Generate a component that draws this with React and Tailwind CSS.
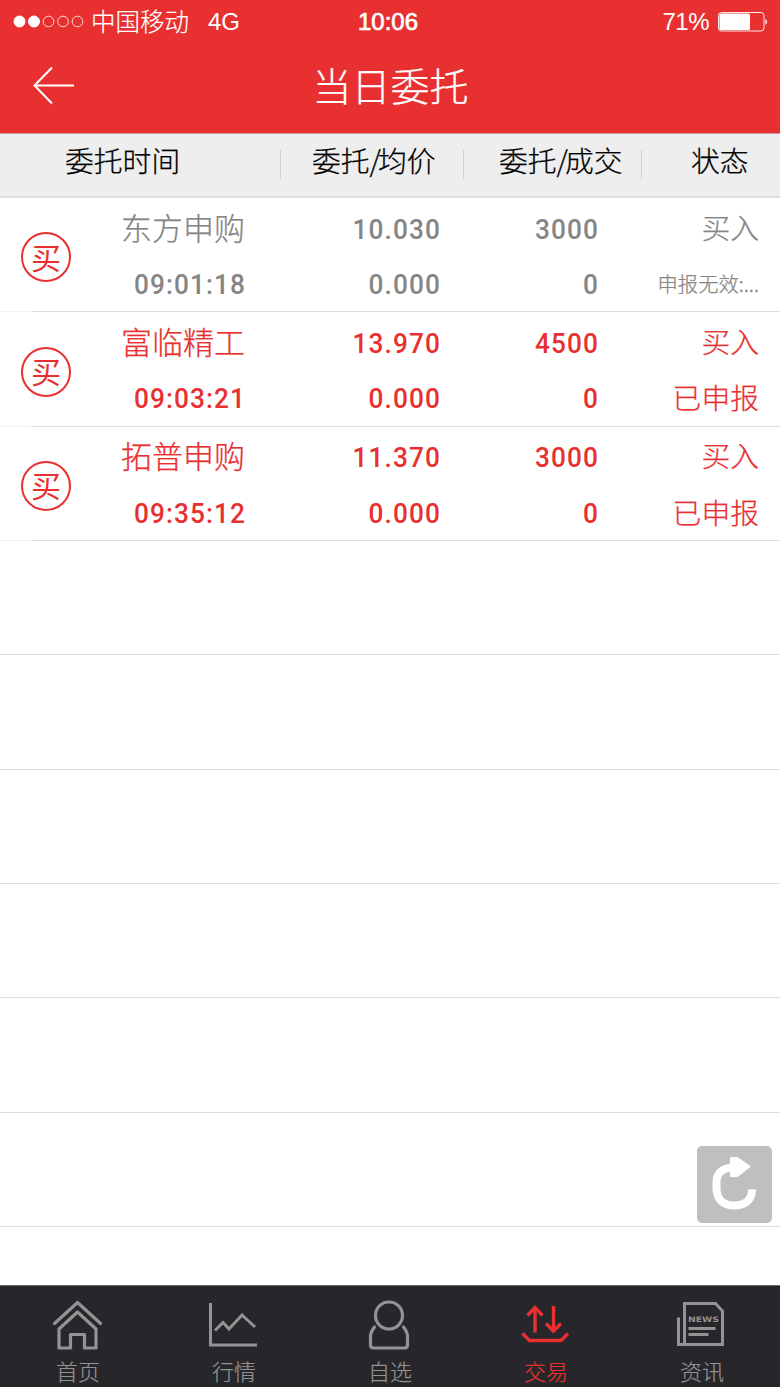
import React, { useState } from 'react';
import clsx from 'clsx';

const orders = [
  { name: '东方申购', time: '09:01:18', price: '10.030', avg: '0.000', amount: '3000', filled: '0', side: '买入', status: '申报无效:...', invalid: true },
  { name: '富临精工', time: '09:03:21', price: '13.970', avg: '0.000', amount: '4500', filled: '0', side: '买入', status: '已申报' },
  { name: '拓普申购', time: '09:35:12', price: '11.370', avg: '0.000', amount: '3000', filled: '0', side: '买入', status: '已申报' },
];

const HomeIcon = () => (
  <svg width="52" height="52" viewBox="0 0 52 52" fill="none" stroke="currentColor" strokeWidth="3.2" strokeLinecap="round" strokeLinejoin="round">
    <path d="M2.500 24.500L25.500 3.500L48.500 24.500" />
    <path d="M25.500 13L44 30V49H32.500V35.500H18.500V49H7V30Z" />
  </svg>
);

const ChartIcon = () => (
  <svg width="52" height="52" viewBox="0 0 52 52" fill="none" stroke="currentColor" strokeWidth="3">
    <path d="M2.500 4V46H49" />
    <path d="M7 31.500L15 23.500L21 30L34 16L47 28" />
  </svg>
);

const UserIcon = () => (
  <svg width="52" height="52" viewBox="0 0 52 52" fill="none" stroke="currentColor" strokeWidth="3.2" strokeLinecap="round">
    <circle cx="25" cy="16.500" r="13.500" />
    <path d="M10.500 28C7.500 32 6.500 33.500 6.500 37V46Q6.500 49 9.500 49H40.500Q43.500 49 43.500 46V37C43.500 33.500 42.500 32 39.500 28" />
  </svg>
);

const TradeIcon = () => (
  <svg width="52" height="52" viewBox="0 0 52 52" fill="none" stroke="currentColor" strokeWidth="3.4">
    <path d="M15 33.500V9M7.500 16.500L15 8.500L22.500 16.500" />
    <path d="M33.500 7V31M26 24.500L33.500 32L41 24.500" />
    <path d="M2.500 34.500L9.500 41.500H41L48 34.500" />
  </svg>
);

const NewsIcon = () => (
  <svg width="52" height="52" viewBox="0 0 52 52" fill="none" stroke="currentColor" strokeWidth="3">
    <path d="M8.500 46V4.500H39.500L46.500 12V45.500H2.500V18.500" />
    <path d="M12.500 29.500H39.500M12.500 35.500H32.500" />
    <text x="12" y="22.500" fontSize="7.500" fontWeight="700" fontFamily="DejaVu Sans" stroke="none" fill="currentColor" textLength="31" lengthAdjust="spacingAndGlyphs">NEWS</text>
  </svg>
);

const tabs = [
  { label: '首页', icon: HomeIcon },
  { label: '行情', icon: ChartIcon },
  { label: '自选', icon: UserIcon },
  { label: '交易', icon: TradeIcon },
  { label: '资讯', icon: NewsIcon },
];

const StatusBar = () => (
  <div className="flex h-11 items-center justify-between pl-[13px] pr-3 text-2xl leading-none">
    <div className="flex w-[298px] items-center">
      <svg width="72" height="14" viewBox="0 0 72 14" fill="none" stroke="white">
        <circle cx="6.500" cy="6.500" r="5.500" fill="white" />
        <circle cx="21" cy="6.500" r="5.500" fill="white" />
        <circle cx="35.500" cy="6.500" r="5.300" strokeWidth="0.800" />
        <circle cx="50" cy="6.500" r="5.300" strokeWidth="0.800" />
        <circle cx="64.500" cy="6.500" r="5.300" strokeWidth="0.800" />
      </svg>
      <span className="ml-[6px] pb-[2px] font-['Noto_Sans_CJK_SC',sans-serif] text-[24.5px] font-light [-webkit-text-stroke:0.2px]">中国移动</span>
      <span className="ml-[19px]">4G</span>
    </div>
    <span className="[-webkit-text-stroke:0.7px_white]">10:06</span>
    <div className="flex w-[303px] items-center justify-end">
      <span className="tracking-[-0.5px]">71%</span>
      <svg className="ml-[9px]" width="50" height="20" viewBox="0 0 50 20">
        <rect x="0.500" y="0.500" width="45.500" height="18.500" rx="3" fill="none" stroke="white" strokeWidth="0.900" />
        <rect x="1.500" y="1.500" width="30.500" height="16.500" rx="1.500" fill="white" />
        <path d="M47.500 6.500Q50.500 9.800 47.500 13Z" fill="white" />
      </svg>
    </div>
  </div>
);

// narrow digits, right aligned
const Num = ({ children }) => (
  <p className="-mr-px origin-right scale-x-[0.92] font-[Roboto,sans-serif] leading-[55.5px] font-medium tracking-[1.2px]">
    {children}
  </p>
);

const OrderRow = ({ order }) => (
  <li
    className={clsx(
      'flex h-[114.35px] items-stretch text-[28.5px]',
      order.invalid ? 'text-[#858585]' : 'text-[#e83030]'
    )}
  >
    <div className="flex w-[31px] shrink-0 items-center border-b border-[#f3f3f3] pt-[5px] pl-[21px]">
      <div className="flex size-[50px] shrink-0 items-center justify-center rounded-full border-2 border-[#e83030] pb-[3px] text-[30px] leading-none font-normal text-[#e83030]">
        买
      </div>
    </div>
    <div className="flex flex-1 border-b border-[#dcdcdc] pt-[3.5px] pr-[21px] text-right">
      <div className="w-[214px]">
        <p className="h-[55.5px] text-[31px] leading-[50px] font-light [-webkit-text-stroke:0.25px]">{order.name}</p>
        <Num>{order.time}</Num>
      </div>
      <div className="w-[195px]">
        <Num>{order.price}</Num>
        <Num>{order.avg}</Num>
      </div>
      <div className="w-[158px]">
        <Num>{order.amount}</Num>
        <Num>{order.filled}</Num>
      </div>
      <div className="flex-1 text-[28.8px] font-light [-webkit-text-stroke:0.25px]">
        <p className="h-[55.5px] leading-[50px]">{order.side}</p>
        <p className={clsx('leading-[52px]', order.invalid && 'text-[20.3px]')}>{order.status}</p>
      </div>
    </div>
  </li>
);

const App = () => {
  const [activeTab, setActiveTab] = useState('交易');

  return (
    <div className="flex h-[1387px] w-[780px] flex-col overflow-hidden bg-white font-['Noto_Sans_CJK_SC',sans-serif]">
      <header className="h-[134px] shrink-0 border-b border-[#c9a0a0] bg-[#e83030] font-['Liberation_Sans',sans-serif] text-white">
        <StatusBar />
        <div className="flex h-[82px] items-center pl-8">
          <button type="button" aria-label="返回">
            <svg width="44" height="40" viewBox="0 0 44 40" fill="none" stroke="white" strokeWidth="2">
              <path d="M42 20.500H2.500M20 2.500L2.500 20.500L20 38.500" />
            </svg>
          </button>
          <h1 className="flex-1 pr-[75px] pb-px text-center font-['Noto_Sans_CJK_SC',sans-serif] text-[39px] leading-none font-light [-webkit-text-stroke:0.25px]">当日委托</h1>
        </div>
      </header>

      <div className="flex h-16 shrink-0 border-b-2 border-[#dfdfdf] bg-[#eeeeee] text-[28.8px] leading-[52px] font-light text-black [-webkit-text-stroke:0.25px]">
        <span className="w-[280px] pl-[65px]">委托时间</span>
        <i className="mt-4 h-[29px] w-px bg-[#d0d0d0]" />
        <span className="w-[182px] pl-[31px]">委托<span className="tracking-[-3px]">/</span>均价</span>
        <i className="mt-4 h-[29px] w-px bg-[#d0d0d0]" />
        <span className="w-[177px] pl-[35px]">委托<span className="tracking-[-3px]">/</span>成交</span>
        <i className="mt-4 h-[29px] w-px bg-[#d0d0d0]" />
        <span className="pl-[49px]">状态</span>
      </div>

      <main className="relative min-h-0 flex-1 overflow-hidden">
        <ul>
          {orders.map((order) => (
            <OrderRow key={order.time} order={order} />
          ))}
          {Array.from({ length: 7 }).map((_, i) => (
            <li key={i} className="h-[114.35px] border-b border-[#dcdcdc]" />
          ))}
        </ul>
        <button type="button" aria-label="刷新" className="absolute right-2 bottom-[62px] h-[77px] w-[75px] rounded-[5px] bg-[#bfbfbf]">
          <svg width="75" height="77" viewBox="0 0 75 77" fill="none">
            <path d="M37 21.500C26 21.500 19.500 27 19.500 36V42C19.500 53 26 59.500 37 59.500C48 59.500 55 54 55 43.500" stroke="white" strokeWidth="8" />
            <path d="M33 11H40.500L54 20.500L40.500 31H33Z" fill="white" />
          </svg>
        </button>
      </main>

      <nav className="flex h-[102px] shrink-0 border-t border-[#6a6a6c] bg-[#27262b]">
        {tabs.map(({ label, icon: Icon }) => (
          <button
            key={label}
            type="button"
            onClick={() => setActiveTab(label)}
            className={clsx(
              'flex flex-1 flex-col items-center pt-[13px]',
              activeTab === label ? 'text-[#e83030]' : 'text-[#939393]'
            )}
          >
            <Icon />
            <span className="mt-[8px] text-[22px] leading-[22px] font-light [-webkit-text-stroke:0.2px]">{label}</span>
          </button>
        ))}
      </nav>
    </div>
  );
};

export default App;
